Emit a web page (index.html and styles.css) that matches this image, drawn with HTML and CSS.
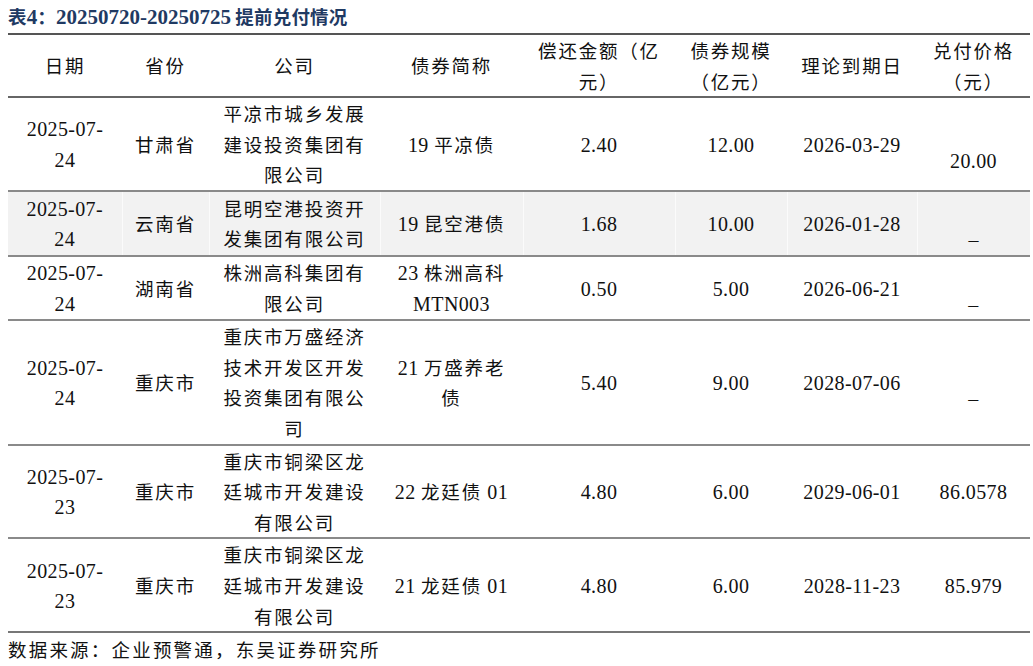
FILE: index.html
```html
<!DOCTYPE html>
<html lang="zh-CN">
<head>
<meta charset="utf-8">
<title>表4</title>
<link rel="stylesheet" href="styles.css">
</head>
<body>
<div class="page">
  <div class="title">表<span class="tn">4</span>：<span class="tn">20250720-20250725</span> 提前兑付情况</div>
  <table class="tbl">
    <colgroup>
      <col class="c1"><col class="c2"><col class="c3"><col class="c4"><col class="c5"><col class="c6"><col class="c7"><col class="c8">
    </colgroup>
    <thead>
      <tr>
        <th>日期</th>
        <th>省份</th>
        <th>公司</th>
        <th>债券简称</th>
        <th>偿还金额（亿<br>元）</th>
        <th>债券规模<br>（亿元）</th>
        <th>理论到期日</th>
        <th>兑付价格<br>（元）</th>
      </tr>
    </thead>
    <tbody>
      <tr>
        <td><span class="n">2025-07-<br>24</span></td>
        <td>甘肃省</td>
        <td>平凉市城乡发展<br>建设投资集团有<br>限公司</td>
        <td><span class="n">19 </span>平凉债</td>
        <td><span class="n">2.40</span></td>
        <td><span class="n">12.00</span></td>
        <td><span class="n">2026-03-29</span></td>
        <td class="low"><span class="n">20.00</span></td>
      </tr>
      <tr class="shade">
        <td><span class="n">2025-07-<br>24</span></td>
        <td>云南省</td>
        <td>昆明空港投资开<br>发集团有限公司</td>
        <td><span class="n">19 </span>昆空港债</td>
        <td><span class="n">1.68</span></td>
        <td><span class="n">10.00</span></td>
        <td><span class="n">2026-01-28</span></td>
        <td class="low"><span class="n">–</span></td>
      </tr>
      <tr>
        <td><span class="n">2025-07-<br>24</span></td>
        <td>湖南省</td>
        <td>株洲高科集团有<br>限公司</td>
        <td><span class="n">23 </span>株洲高科<br><span class="n">MTN003</span></td>
        <td><span class="n">0.50</span></td>
        <td><span class="n">5.00</span></td>
        <td><span class="n">2026-06-21</span></td>
        <td class="low"><span class="n">–</span></td>
      </tr>
      <tr>
        <td><span class="n">2025-07-<br>24</span></td>
        <td>重庆市</td>
        <td>重庆市万盛经济<br>技术开发区开发<br>投资集团有限公<br>司</td>
        <td><span class="n">21 </span>万盛养老<br>债</td>
        <td><span class="n">5.40</span></td>
        <td><span class="n">9.00</span></td>
        <td><span class="n">2028-07-06</span></td>
        <td class="low"><span class="n">–</span></td>
      </tr>
      <tr>
        <td><span class="n">2025-07-<br>23</span></td>
        <td>重庆市</td>
        <td>重庆市铜梁区龙<br>廷城市开发建设<br>有限公司</td>
        <td><span class="n">22 </span>龙廷债<span class="n"> 01</span></td>
        <td><span class="n">4.80</span></td>
        <td><span class="n">6.00</span></td>
        <td><span class="n">2029-06-01</span></td>
        <td><span class="n">86.0578</span></td>
      </tr>
      <tr>
        <td><span class="n">2025-07-<br>23</span></td>
        <td>重庆市</td>
        <td>重庆市铜梁区龙<br>廷城市开发建设<br>有限公司</td>
        <td><span class="n">21 </span>龙廷债<span class="n"> 01</span></td>
        <td><span class="n">4.80</span></td>
        <td><span class="n">6.00</span></td>
        <td><span class="n">2028-11-23</span></td>
        <td><span class="n">85.979</span></td>
      </tr>
    </tbody>
  </table>
  <div class="source">数据来源：企业预警通，东吴证券研究所</div>
</div>
</body>
</html>
```

FILE: styles.css
```css
html, body {
  margin: 0;
  padding: 0;
  background: #ffffff;
}

.page {
  padding: 0 3px 0 8px;
  font-family: "Noto Sans CJK SC", "Liberation Serif", sans-serif;
  color: #111111;
}

.title {
  height: 33px;
  line-height: 32px;
  font-size: 18.5px;
  font-weight: bold;
  color: #1f3a63;
  letter-spacing: 0.2px;
  white-space: nowrap;
}

.title .tn {
  font-family: "Liberation Serif", serif;
  font-size: 21px;
  font-weight: bold;
  letter-spacing: 0;
  line-height: 20px;
}

.tbl {
  width: 1022px;
  border-collapse: collapse;
  table-layout: fixed;
  border-top: 2px solid #555555;
  border-bottom: 2px solid #777777;
}

.c1 { width: 114px; }
.c2 { width: 87px; }
.c3 { width: 171px; }
.c4 { width: 143px; }
.c5 { width: 152px; }
.c6 { width: 112px; }
.c7 { width: 130px; }
.c8 { width: 113px; }

.tbl th,
.tbl td {
  padding: 0;
  text-align: center;
  vertical-align: middle;
  font-size: 18.5px;
  font-weight: normal;
  line-height: 30.6px;
  letter-spacing: 1.8px;
  white-space: nowrap;
  color: #111111;
}

.tbl thead th {
  border-bottom: 2px solid #666666;
}

.tbl tbody tr {
  border-bottom: 2px solid #8a8a8a;
}

.tbl tbody tr:last-child {
  border-bottom: 0;
}

.tbl tr.shade td {
  background: #f2f2f2;
  border-right: 1px solid #fbfbfb;
}

.tbl tr.shade td:last-child {
  border-right: 0;
}

.n {
  font-family: "Liberation Serif", serif;
  font-size: 20px;
  letter-spacing: 0.4px;
  line-height: 18px;
}

.tbl td.low {
  padding-top: 32px;
}

.source {
  line-height: 32px;
  font-size: 18.5px;
  letter-spacing: 2.2px;
  white-space: nowrap;
  color: #111111;
}
```
